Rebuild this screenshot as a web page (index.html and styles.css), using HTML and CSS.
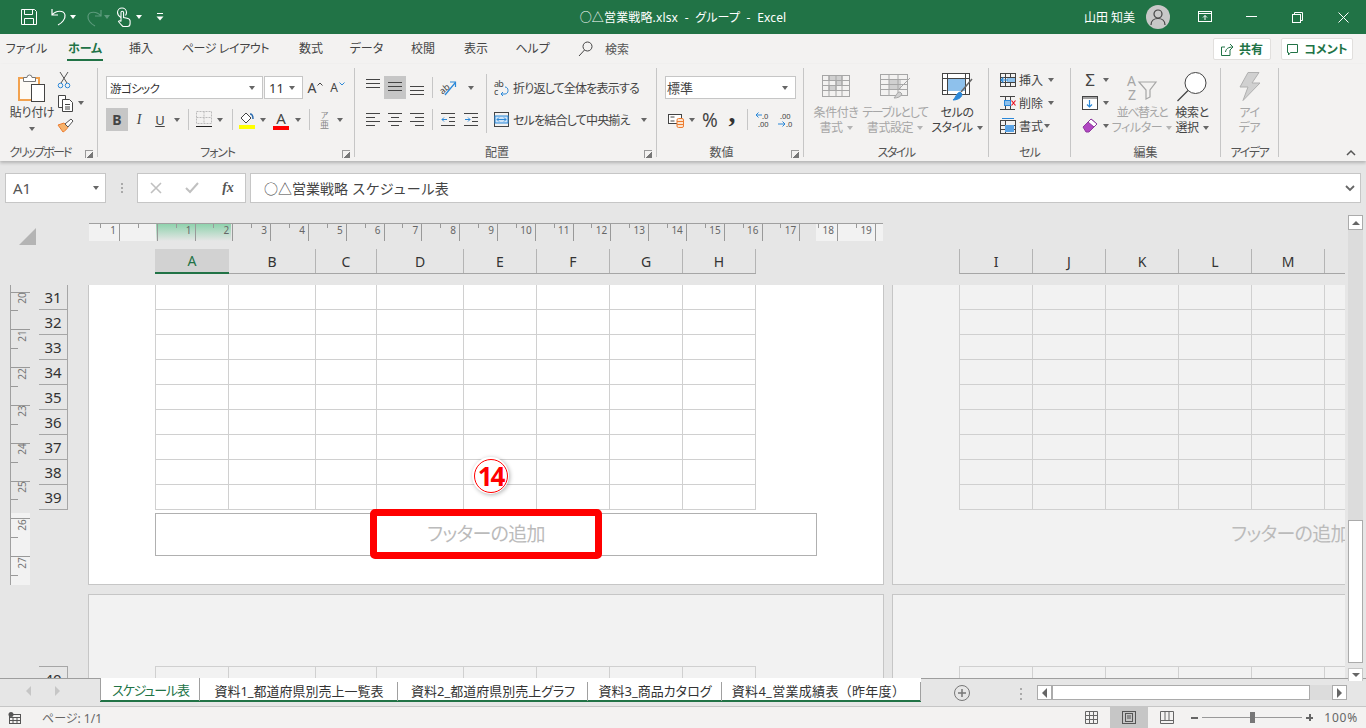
FILE: index.html
```html
<!DOCTYPE html>
<html lang="ja">
<head>
    <meta charset="UTF-8">
    <title>○△営業戦略.xlsx - グループ - Excel</title>
    <link rel="stylesheet" href="styles.css">
</head>
<body>
    <!-- タイトルバー -->
    <header class="titlebar">
        <div class="qat">
            <svg class="qat-save" width="18" height="18" viewBox="0 0 18 18" fill="none" stroke="#fff"><path d="M1.5 1.5h13l2 2v13h-15z"/><path d="M4.5 1.5v5h8v-5M4.5 16.5v-6h9v6"/></svg>
            <svg class="qat-undo" width="20" height="20" viewBox="0 0 20 20" fill="none" stroke="#fff" stroke-width="1.2"><path d="M2 2v6h6M2 8c4-5 12-5 13 0 .6 4-3 8-7 10"/></svg>
            <span class="caret white qat-undo-c"></span>
            <svg class="qat-redo" width="18" height="20" viewBox="0 0 18 20" fill="none" stroke="#5c9a7c" stroke-width="1.2"><path d="M16 3v6h-6M16 9c-4-5-12-5-13 0-.6 4 3 8 7 10"/></svg>
            <span class="caret dim qat-redo-c"></span>
            <svg class="qat-touch" width="16" height="20" viewBox="0 0 16 20" fill="none" stroke="#fff" stroke-width="1.1"><path d="M5 10.500C2.500 9 1.500 7 1.500 5.500a4.500 4.500 0 0 1 9 0c0 1-.3 2-1 3"/><path d="M5 5.500a1.300 1.300 0 0 1 2.600 0v5l3.500.7c1.500.3 3 1 3 2.800v2.500c0 1.500-1 3-2.500 3H7c-1.500-1-3-3-4.500-5 .5-1 2-1 2.500 0z"/></svg>
            <span class="caret white qat-touch-c"></span>
            <svg class="qat-more" width="10" height="10" viewBox="0 0 10 10" fill="#fff"><rect x="2" y="1" width="6" height="1"/><path d="M1.500 4.500h7L5 8.500z"/></svg>
        </div>
        <div class="doc-title">○△営業戦略.xlsx&nbsp; - &nbsp;グループ&nbsp; - &nbsp;Excel</div>
        <div class="title-right">
            <span class="user-name">山田 知美</span>
            <span class="avatar">
                <svg width="16" height="16" viewBox="0 0 16 16" fill="none" stroke="#444" stroke-width="1.200"><circle cx="8" cy="5" r="4"/><path d="M1 16c0-4 3-6.500 7-6.500s7 2.500 7 6.500"/></svg>
            </span>
            <span class="win-btn"><svg width="14" height="12" viewBox="0 0 14 12" fill="none" stroke="#fff"><rect x=".5" y=".5" width="13" height="10"/><path d="M.5 2.500h13M7 9V4.500M5 6.500l2-2 2 2"/></svg></span>
            <span class="win-btn"><svg width="11" height="2" viewBox="0 0 11 2" fill="none" stroke="#fff"><path d="M0 .5h11"/></svg></span>
            <span class="win-btn"><svg width="11" height="11" viewBox="0 0 11 11" fill="none" stroke="#fff"><rect x=".5" y="2.500" width="8" height="8"/><path d="M2.500 2.500v-2h8v8h-2"/></svg></span>
            <span class="win-btn"><svg width="11" height="11" viewBox="0 0 11 11" fill="none" stroke="#fff"><path d="M.5.500l10 10M10.500.5l-10 10"/></svg></span>
        </div>
    </header>

    <!-- リボンのタブ -->
    <nav class="tabs">
        <ul class="tab-list">
            <li>ファイル</li>
            <li class="current"><span>ホーム</span></li>
            <li>挿入</li>
            <li>ページ レイアウト</li>
            <li>数式</li>
            <li>データ</li>
            <li>校閲</li>
            <li>表示</li>
            <li>ヘルプ</li>
        </ul>
        <div class="tell-me">
            <svg width="15" height="16" viewBox="0 0 15 16" fill="none" stroke="#444"><circle cx="9.500" cy="5.500" r="4.500"/><path d="M6.500 9L1 15"/></svg>
            <span>検索</span>
        </div>
        <div class="tab-actions">
            <button class="action-btn share">
                <svg width="13" height="13" viewBox="0 0 13 13" fill="none" stroke="#217346"><path d="M9 7v5.500H.5V4H4"/><path d="M4.500 9C5 5.500 7.500 4 12 4M9 1l3 3-3 3"/></svg>
                共有
            </button>
            <button class="action-btn comment">
                <svg width="13" height="13" viewBox="0 0 13 13" fill="none" stroke="#217346"><path d="M1.500 1.500h10v8h-7l-2 2.500v-2.500h-1z"/></svg>
                コメント
            </button>
        </div>
    </nav>

    <!-- リボン -->
    <section class="ribbon">
        <div class="group g-clip">
            <div class="group-body clip-body">
                <div class="paste">
                    <svg width="28" height="32" viewBox="0 0 28 32"><rect x="1" y="7" width="20" height="22" fill="#fdfaf5" stroke="#f2a24f" stroke-width="2"/><path d="M5.500 10.500v-4h3.500a2.500 2.500 0 0 1 5 0h3.500v4z" fill="#fff" stroke="#777"/><rect x="13.500" y="13.500" width="13" height="17" fill="#fff" stroke="#444"/></svg>
                    <span class="paste-label">貼り付け</span>
                    <span class="caret"></span>
                </div>
                <div class="clip-tools">
                    <span class="tool"><svg width="14" height="18" viewBox="0 0 14 18" fill="none"><path d="M3 1l7 11M11 1L4 12" stroke="#555"/><circle cx="3.500" cy="14.500" r="2.300" stroke="#2b88d8"/><circle cx="10.500" cy="14.500" r="2.300" stroke="#2b88d8"/></svg></span>
                    <span class="tool"><svg width="18" height="18" viewBox="0 0 18 18" fill="#fff" stroke="#444"><path d="M1.500 1.500h7v12h-7z"/><path d="M5.500 5.500h7l3 3v9h-10z"/><path d="M8 10.500h5M8 13h5M8 15h5" fill="none"/></svg><span class="caret clip-caret"></span></span>
                    <span class="tool"><svg width="17" height="15" viewBox="0 0 17 15"><path d="M1 7l5 7c2-1 4-3 5-5L7 5z" fill="#f6b26b" stroke="#ed7d31"/><path d="M8 6l6-5 2 2-5 6z" fill="#fff" stroke="#555"/></svg></span>
                </div>
            </div>
            <div class="group-label">クリップボード</div>
            <span class="launcher"></span>
        </div>

        <div class="group g-font">
            <div class="group-body font-body">
                <div class="font-row1">
                    <div class="select font-name">游ゴシック<span class="caret"></span></div>
                    <div class="select font-size">11<span class="caret"></span></div>
                    <span class="cell grow-a"><span class="letter">A</span><svg width="6" height="4" viewBox="0 0 6 4" fill="none" stroke="#444"><path d="M.5 3.500L3 1l2.500 2.500"/></svg></span>
                    <span class="cell shrink-a"><span class="letter small">A</span><svg width="6" height="4" viewBox="0 0 6 4" fill="none" stroke="#2b88d8"><path d="M.5.500L3 3l2.500-2.500"/></svg></span>
                </div>
                <div class="font-row2">
                    <span class="cell on bold-b">B</span>
                    <span class="cell ital-i">I</span>
                    <span class="cell under-u">U</span>
                    <span class="cell"><span class="caret"></span></span>
                    <span class="cell"><i class="sep"></i></span>
                    <span class="cell"><svg width="16" height="17" viewBox="0 0 16 17" fill="none"><path d="M.5.500h15v12H.5zM8 .5v12M.5 6.500h15" stroke="#bbb" stroke-dasharray="2 1"/><path d="M0 15.500h16" stroke="#222"/></svg></span>
                    <span class="cell"><span class="caret"></span></span>
                    <span class="cell"><i class="sep"></i></span>
                    <span class="cell"><svg width="16" height="18" viewBox="0 0 16 18"><path d="M2 7l5-5 5 5-5 5z" fill="#fff" stroke="#444"/><path d="M11 3c2 0 3 2 3 5" fill="none" stroke="#2b6cb0" stroke-width="1.500"/><rect y="14" width="16" height="4" fill="#ffff00"/></svg></span>
                    <span class="cell"><span class="caret"></span></span>
                    <span class="cell font-a"><span class="a-glyph">A</span></span>
                    <span class="cell"><span class="caret"></span></span>
                    <span class="cell"><i class="sep"></i></span>
                    <span class="cell phonetic"><small>ア</small><span>亜</span></span>
                    <span class="cell"><span class="caret"></span></span>
                </div>
            </div>
            <div class="group-label">フォント</div>
            <span class="launcher"></span>
        </div>

        <div class="group g-align">
            <div class="group-body align-body">
                <div class="align-left">
                    <div class="align-row">
                        <span class="cell"><svg class="high" width="15" height="11" viewBox="0 0 15 11" stroke="#444"><path d="M0 1.500h14M0 5.500h14M0 9.500h14"/></svg></span>
                        <span class="cell on"><svg class="mid" width="15" height="11" viewBox="0 0 15 11" stroke="#444"><path d="M0 1.500h14M0 5.500h14M0 9.500h14"/></svg></span>
                        <span class="cell"><svg class="low" width="15" height="11" viewBox="0 0 15 11" stroke="#444"><path d="M0 1.500h14M0 5.500h14M0 9.500h14"/></svg></span>
                        <span class="cell"><i class="sep"></i></span>
                        <span class="cell"><svg width="18" height="16" viewBox="0 0 18 16" fill="none"><text x="1" y="12" transform="rotate(-40 6 10)" font-size="9" fill="#444" font-family="Noto Sans">ab</text><path d="M6 15L16 3M11 2h5.500v5" stroke="#2b88d8" stroke-width="1.200"/></svg></span>
                        <span class="cell"><span class="caret"></span></span>
                    </div>
                    <div class="align-row">
                        <span class="cell"><svg width="15" height="13" viewBox="0 0 15 13" stroke="#444"><path d="M0 .5h14M0 4.500h9M0 8.500h14M0 12.500h9"/></svg></span>
                        <span class="cell"><svg width="15" height="13" viewBox="0 0 15 13" stroke="#444"><path d="M0 .5h14M3 4.500h8M0 8.500h14M3 12.500h8"/></svg></span>
                        <span class="cell"><svg width="15" height="13" viewBox="0 0 15 13" stroke="#444"><path d="M0 .5h14M5 4.500h9M0 8.500h14M5 12.500h9"/></svg></span>
                        <span class="cell"><i class="sep"></i></span>
                        <span class="cell"><svg width="14" height="13" viewBox="0 0 14 13" fill="none"><path d="M0 .5h14M0 12.500h14M8 4.500h6M8 8.500h6" stroke="#444"/><path d="M6 6.500H1M3 4.500l-2 2 2 2" stroke="#2b88d8"/></svg></span>
                        <span class="cell"><svg width="14" height="13" viewBox="0 0 14 13" fill="none"><path d="M0 .5h14M0 12.500h14M8 4.500h6M8 8.500h6" stroke="#444"/><path d="M1 6.500h5M4 4.500l2 2-2 2" stroke="#2b88d8"/></svg></span>
                    </div>
                </div>
                <i class="sep tall"></i>
                <div class="align-right">
                    <div class="wide-tool">
                        <svg width="15" height="18" viewBox="0 0 15 18" fill="none"><text x="0" y="8" font-size="9" fill="#444" font-family="Noto Sans">ab</text><text x="0" y="16" font-size="9" fill="#444" font-family="Noto Sans">c</text><path d="M11 8c4 0 4 7 0 7H7M9 13l-2 2 2 2" stroke="#2b88d8"/></svg>
                        <span>折り返して全体を表示する</span>
                    </div>
                    <div class="wide-tool">
                        <svg width="15" height="15" viewBox="0 0 15 15" fill="none"><rect x=".5" y=".5" width="14" height="14" stroke="#444"/><rect x="1" y="4" width="13" height="7" fill="#cfe4f7" stroke="#2b88d8"/><path d="M3 7.500h9M5 5.500l-2 2 2 2M10 5.500l2 2-2 2" stroke="#2b88d8"/></svg>
                        <span>セルを結合して中央揃え</span>
                        <span class="caret merge-caret"></span>
                    </div>
                </div>
            </div>
            <div class="group-label">配置</div>
            <span class="launcher"></span>
        </div>

        <div class="group g-num">
            <div class="group-body num-body">
                <div class="select num-format">標準<span class="caret"></span></div>
                <div class="num-row">
                    <span class="cell"><svg width="16" height="16" viewBox="0 0 16 16" fill="none"><rect x=".5" y="2.500" width="13" height="9" fill="#fff" stroke="#444"/><path d="M2.500 5h4M2.500 9h4" stroke="#444"/><rect x="9" y="6.500" width="6.500" height="9" rx="1.500" fill="#fbe5d0" stroke="#ed7d31"/><path d="M9 9.500h6.500M9 12.500h6.500" stroke="#ed7d31"/></svg></span>
                    <span class="cell"><span class="caret"></span></span>
                    <span class="cell percent">%</span>
                    <span class="cell comma">,</span>
                    <span class="cell"><i class="sep"></i></span>
                    <span class="cell"><svg width="16" height="17" viewBox="0 0 16 17" fill="none"><text x="7" y="7.500" font-size="7.500" fill="#444" font-family="Noto Sans">.0</text><text x="3" y="16" font-size="7.500" fill="#444" font-family="Noto Sans">.00</text><path d="M7 4H1M3.500 1.500L1 4l2.500 2.500" stroke="#2b88d8"/></svg></span>
                    <span class="cell"><svg width="16" height="17" viewBox="0 0 16 17" fill="none"><text x="3" y="7.500" font-size="7.500" fill="#444" font-family="Noto Sans">.00</text><text x="9" y="16" font-size="7.500" fill="#444" font-family="Noto Sans">.0</text><path d="M1 13h7M5.500 10.500L8 13l-2.500 2.500" stroke="#2b88d8"/></svg></span>
                </div>
            </div>
            <div class="group-label">数値</div>
            <span class="launcher"></span>
        </div>

        <div class="group g-style">
            <div class="group-body style-body">
                <div class="big off w56">
                    <span class="big-icon"><svg width="28" height="23" viewBox="0 0 28 23" fill="#d0d0d0" stroke="#a6a6a6"><rect x=".5" y=".5" width="27" height="21" fill="#f3f2f1"/><path d="M7 .5h13v5H7zM14 5.500h6v5h-6zM7 10.500h7v5H7z"/><path d="M.5 5.500h27M.5 10.500h27M.5 15.500h27M7 .5v21M14 .5v21M20 .5v21" fill="none"/></svg></span>
                    <span class="big-text">条件付き</span>
                    <span class="big-text">書式<span class="caret soft"></span></span>
                </div>
                <div class="big off w62">
                    <span class="big-icon"><svg width="31" height="25" viewBox="0 0 31 25" fill="none" stroke="#a6a6a6"><rect x=".5" y=".5" width="27" height="21" fill="#f3f2f1"/><rect x="9" y="6" width="12" height="10" fill="#d0d0d0" stroke="none"/><path d="M.5 5.500h27M.5 10.500h27M.5 15.500h27M9 .5v21M18 .5v21"/><path d="M30 4L18 16M14 24c2-2 3-6 6-6l2 2c-1 3-5 4-8 4z" fill="#d0d0d0"/></svg></span>
                    <span class="big-text tight">テーブルとして</span>
                    <span class="big-text">書式設定<span class="caret soft"></span></span>
                </div>
                <div class="big w62">
                    <span class="big-icon"><svg width="31" height="28" viewBox="0 0 31 28" fill="none" stroke="#444"><rect x=".5" y=".5" width="27" height="21" fill="#fff"/><rect x="5" y="5" width="18" height="13" fill="#8ec1ec" stroke="none"/><path d="M.5 5.500h27M5.500.5v21M23.500.5v21M.5 17.500h4"/><path d="M30 6L19 19" stroke="#666" stroke-width="1.500"/><path d="M11 27c3-2 3-7 7-8l2 2c0 4-5 6-9 6z" fill="#2b88d8" stroke="#2b88d8"/></svg></span>
                    <span class="big-text">セルの</span>
                    <span class="big-text">スタイル<span class="caret"></span></span>
                </div>
            </div>
            <div class="group-label">スタイル</div>
        </div>

        <div class="group g-cell">
            <div class="group-body cell-body">
                <div class="cell-row">
                    <svg width="16" height="14" viewBox="0 0 16 14" fill="none"><rect x=".5" y=".5" width="15" height="13" stroke="#444"/><path d="M5.500.5v13M10.500.5v13M.5 4.500h15M.5 9.500h15" stroke="#444"/><rect x="7" y="5" width="8" height="4" fill="#8ec1ec"/><path d="M8 7H1M3.500 4.500L1 7l2.500 2.500" stroke="#2b88d8" stroke-width="1.200"/></svg>
                    <span>挿入</span><span class="caret"></span>
                </div>
                <div class="cell-row">
                    <svg width="16" height="14" viewBox="0 0 16 14" fill="none"><path d="M0 .5h15M0 13.500h15M5.500 0v14M10.500 0v4M10.500 10v4" stroke="#444"/><rect x="4.500" y="4.500" width="6" height="5" fill="#8ec1ec" stroke="#2b88d8"/><path d="M11.500 4.500l4 5M15.500 4.500l-4 5" stroke="#e81123" stroke-width="1.200"/></svg>
                    <span>削除</span><span class="caret"></span>
                </div>
                <div class="cell-row short">
                    <svg width="16" height="16" viewBox="0 0 16 16" fill="none"><rect x=".5" y="2.500" width="15" height="13" stroke="#444"/><path d="M5.500 2.500v13M.5 7.500h15M.5 11.500h15" stroke="#444"/><rect x="5" y="7" width="9" height="7" fill="#5ba4e6"/><path d="M2 .5h12" stroke="#2b88d8"/></svg>
                    <span>書式</span><span class="caret"></span>
                </div>
            </div>
            <div class="group-label">セル</div>
        </div>

        <div class="group g-edit">
            <div class="group-body edit-body">
                <div class="edit-tools">
                    <div class="edit-row"><span class="sigma">Σ</span><span class="caret"></span></div>
                    <div class="edit-row"><svg width="16" height="14" viewBox="0 0 16 14" fill="none"><rect x=".5" y=".5" width="15" height="13" fill="#fff" stroke="#444"/><path d="M.5 2h15" stroke="#444"/><path d="M7.500 4v7M5 8.500l2.500 2.500L10 8.500" stroke="#2b88d8" stroke-width="1.200"/></svg><span class="caret"></span></div>
                    <div class="edit-row"><svg width="16" height="15" viewBox="0 0 16 15"><path d="M1 9l8-8 6 5-8 8H4z" fill="#b146c2" stroke="#8e3a9e"/><path d="M6 4l3-3 6 5-3 3z" fill="#fff" stroke="#8e3a9e"/></svg><span class="caret"></span></div>
                </div>
                <div class="big off w56">
                    <span class="big-icon"><svg width="30" height="28" viewBox="0 0 30 28"><text x="0" y="13" font-size="14" fill="#a6a6a6" font-family="Noto Sans">A</text><text x="1" y="27" font-size="14" fill="#a6a6a6" font-family="Noto Sans">Z</text><path d="M12 9h17l-6 8v7l-4 2v-9z" fill="none" stroke="#a6a6a6" stroke-width="1.200"/></svg></span>
                    <span class="big-text tight">並べ替えと</span>
                    <span class="big-text">フィルター<span class="caret soft"></span></span>
                </div>
                <div class="big w44">
                    <span class="big-icon"><svg width="30" height="30" viewBox="0 0 30 30" fill="none" stroke="#444"><circle cx="18.500" cy="11" r="10.500" fill="#fff"/><path d="M11 18.500L.5 29" stroke-width="1.200"/></svg></span>
                    <span class="big-text">検索と</span>
                    <span class="big-text">選択<span class="caret"></span></span>
                </div>
            </div>
            <div class="group-label">編集</div>
        </div>

        <div class="group g-idea">
            <div class="group-body idea-body">
                <div class="big off">
                    <span class="big-icon"><svg width="22" height="29" viewBox="0 0 22 29" fill="#d0d0d0" stroke="#b0b0b0"><path d="M9 .5h11L13 11h8L4 28.500 9 15H1z"/></svg></span>
                    <span class="big-text">アイ</span>
                    <span class="big-text">デア</span>
                </div>
            </div>
            <div class="group-label">アイデア</div>
        </div>

        <svg class="collapse" width="10" height="6" viewBox="0 0 10 6" fill="none" stroke="#555" stroke-width="1.500"><path d="M1 5l4-4 4 4"/></svg>
    </section>

    <!-- 数式バー -->
    <section class="formula-bar">
        <div class="name-box">A1<span class="caret"></span></div>
        <div class="fx-dots"><i></i><i></i><i></i></div>
        <div class="fx-buttons">
            <svg width="12" height="12" viewBox="0 0 12 12" fill="none" stroke="#c0c0c0" stroke-width="1.600"><path d="M1 1l10 10M11 1L1 11"/></svg>
            <svg width="14" height="12" viewBox="0 0 14 12" fill="none" stroke="#c0c0c0" stroke-width="2"><path d="M1 6l4 4 8-9"/></svg>
            <span class="fx-label">fx</span>
        </div>
        <div class="fx-input">
            <span>○△営業戦略 スケジュール表</span>
            <svg width="10" height="7" viewBox="0 0 10 7" fill="none" stroke="#666" stroke-width="1.800"><path d="M1 1l4 4 4-4"/></svg>
        </div>
    </section>

    <!-- シート -->
    <main class="workspace">
        <div class="sheet">
            <svg class="corner" width="17" height="17" viewBox="0 0 17 17" fill="#b4b4b4"><path d="M17 0v17H0z"/></svg>

            <div class="h-ruler">
                <span>1</span><span></span>
                <span>1</span><span>2</span><span>3</span><span>4</span><span>5</span><span>6</span><span>7</span>
                <span>8</span><span>9</span><span>10</span><span>11</span><span>12</span><span>13</span><span>14</span>
                <span>15</span><span>16</span><span>17</span><span>18</span><span>19</span>
            </div>

            <div class="col-heads left-heads">
                <span class="selected">A</span><span>B</span><span>C</span><span>D</span><span>E</span><span>F</span><span>G</span><span>H</span>
            </div>
            <div class="col-heads right-heads">
                <span>I</span><span>J</span><span>K</span><span>L</span><span>M</span><span></span>
            </div>

            <div class="rail">
                <div class="v-ruler">
                    <span>20</span><span>21</span><span>22</span><span>23</span><span>24</span><span>25</span><span>26</span><span>27</span>
                </div>
                <div class="row-heads">
                    <span>31</span><span>32</span><span>33</span><span>34</span><span>35</span><span>36</span><span>37</span><span>38</span><span>39</span>
                </div>
            </div>

            <div class="page page-a">
                <div class="cells eight">
                    <i></i><i></i><i></i><i></i><i></i><i></i><i></i><i></i>
                    <i></i><i></i><i></i><i></i><i></i><i></i><i></i><i></i>
                    <i></i><i></i><i></i><i></i><i></i><i></i><i></i><i></i>
                    <i></i><i></i><i></i><i></i><i></i><i></i><i></i><i></i>
                    <i></i><i></i><i></i><i></i><i></i><i></i><i></i><i></i>
                    <i></i><i></i><i></i><i></i><i></i><i></i><i></i><i></i>
                    <i></i><i></i><i></i><i></i><i></i><i></i><i></i><i></i>
                    <i></i><i></i><i></i><i></i><i></i><i></i><i></i><i></i>
                    <i></i><i></i><i></i><i></i><i></i><i></i><i></i><i></i>
                </div>
                <div class="footer-box">フッターの追加</div>
                <div class="marker"></div>
                <div class="step-badge"><span>14</span></div>
            </div>
            <div class="page page-b">
                <div class="cells six">
                    <i></i><i></i><i></i><i></i><i></i><i></i>
                    <i></i><i></i><i></i><i></i><i></i><i></i>
                    <i></i><i></i><i></i><i></i><i></i><i></i>
                    <i></i><i></i><i></i><i></i><i></i><i></i>
                    <i></i><i></i><i></i><i></i><i></i><i></i>
                    <i></i><i></i><i></i><i></i><i></i><i></i>
                    <i></i><i></i><i></i><i></i><i></i><i></i>
                    <i></i><i></i><i></i><i></i><i></i><i></i>
                    <i></i><i></i><i></i><i></i><i></i><i></i>
                </div>
                <div class="footer-box plain">フッターの追加</div>
            </div>

            <div class="rail rail-low">
                <div class="row-heads"><span>40</span></div>
            </div>
            <div class="page page-c">
                <div class="cells eight top-line">
                    <i></i><i></i><i></i><i></i><i></i><i></i><i></i><i></i>
                </div>
            </div>
            <div class="page page-d">
                <div class="cells six top-line">
                    <i></i><i></i><i></i><i></i><i></i><i></i>
                </div>
            </div>
        </div>

        <aside class="v-scroll">
            <span class="scroll-btn"><i class="tri-up"></i></span>
            <span class="v-track"></span>
            <span class="v-thumb"></span>
            <span class="scroll-btn low"><i class="tri-down"></i></span>
        </aside>
    </main>

    <!-- シート見出し -->
    <footer class="sheet-tabs">
        <div class="tab-nav"><i class="tri-left"></i><i class="tri-right"></i></div>
        <ul class="sheet-list">
            <li class="active">スケジュール表</li>
            <li>資料1_都道府県別売上一覧表</li>
            <li>資料2_都道府県別売上グラフ</li>
            <li>資料3_商品カタログ</li>
            <li>資料4_営業成績表（昨年度）</li>
        </ul>
        <svg class="add-sheet" width="16" height="16" viewBox="0 0 16 16" fill="none" stroke="#777"><circle cx="8" cy="8" r="7.500"/><path d="M8 4v8M4 8h8" stroke-width="1.500"/></svg>
        <div class="tab-dots"><i></i><i></i><i></i></div>
        <div class="h-scroll">
            <span class="scroll-btn"><i class="tri-left dark"></i></span>
            <span class="h-thumb"></span>
            <span class="h-track"></span>
            <span class="scroll-btn"><i class="tri-right dark"></i></span>
        </div>
    </footer>

    <!-- ステータスバー -->
    <footer class="status">
        <svg class="status-icon" width="13" height="12" viewBox="0 0 13 12" fill="none" stroke="#555"><rect x="1.500" y="2.500" width="11" height="9"/><path d="M1.500 5.500h11M1.500 8.500h11M5 5.500v6M9 5.500v6"/><circle cx="3" cy="2.500" r="2.500" fill="#555" stroke="none"/></svg>
        <span class="page-count">ページ: 1/1</span>
        <div class="status-right">
            <span class="view-btn"><svg width="13" height="13" viewBox="0 0 13 13" fill="none" stroke="#666"><path d="M.5.500h12v12H.5zM4.500.5v12M8.500.5v12M.5 4.500h12M.5 8.500h12"/></svg></span>
            <span class="view-btn active"><svg width="14" height="13" viewBox="0 0 14 13" fill="none" stroke="#555"><rect x=".5" y=".5" width="13" height="12"/><rect x="3.500" y="2.500" width="7" height="8"/><path d="M5 5h4M5 7h4"/></svg></span>
            <span class="view-btn"><svg width="14" height="13" viewBox="0 0 14 13" fill="none" stroke="#666"><path d="M.5.500h13v12H.5zM.5 9.500h13M5 .5v9M9 .5v9" /></svg></span>
            <span class="zoom-minus"></span>
            <span class="slider"><i></i></span>
            <span class="zoom-plus"></span>
            <span class="zoom-value">100%</span>
        </div>
    </footer>
</body>
</html>
```

FILE: styles.css
```css
* {
    box-sizing: border-box;
}

html, body {
    margin: 0;
    height: 100%;
}

body {
    width: 1366px;
    height: 728px;
    overflow: hidden;
    display: flex;
    flex-direction: column;
    background: #e6e6e6;
    color: #444;
    font-family: "Noto Sans", "Noto Sans CJK JP", sans-serif;
    font-size: 12px;
    font-feature-settings: "palt";
}

ul {
    list-style: none;
    margin: 0;
    padding: 0;
}

i {
    font-style: normal;
}

svg {
    display: block;
    flex: none;
    overflow: visible;
}

/* 共通パーツ */
.caret {
    display: inline-block;
    flex: none;
    width: 0;
    height: 0;
    border-left: 3.500px solid transparent;
    border-right: 3.500px solid transparent;
    border-top: 4px solid #666;
}

.caret.white { border-top-color: #fff; }
.caret.dim { border-top-color: #5c9a7c; }
.caret.soft { border-top-color: #b4b4b4; margin-left: 4px; vertical-align: 2px; }

.sep {
    display: block;
    width: 1px;
    height: 21px;
    background: #c6c6c6;
}

.cell {
    display: flex;
    align-items: center;
    justify-content: center;
    height: 23px;
}

.cell.on {
    background: #c6c6c6;
}

.select {
    display: flex;
    align-items: center;
    justify-content: space-between;
    height: 23px;
    padding: 0 7px 0 3px;
    background: #fff;
    border: 1px solid #c6c6c6;
    color: #333;
}

/* タイトルバー */
.titlebar {
    display: grid;
    grid-template-columns: 1fr auto 1fr;
    align-items: center;
    height: 34px;
    flex: none;
    background: #217346;
    color: #fff;
}

.qat {
    display: flex;
    align-items: center;
    padding-left: 20px;
}

.qat-undo { margin-left: 12px; }
.qat-undo-c { margin-left: 0; }
.qat-redo { margin-left: 9px; }
.qat-redo-c { margin-left: 1px; }
.qat-touch { margin-left: 6px; }
.qat-touch-c { margin-left: 4px; }
.qat-more { margin-left: 13px; }

.doc-title {
    font-size: 12px;
    letter-spacing: 0.15px;
    white-space: nowrap;
}

.title-right {
    display: flex;
    align-items: center;
    justify-content: flex-end;
}

.user-name {
    margin-right: 11px;
}

.avatar {
    display: flex;
    align-items: center;
    justify-content: center;
    width: 24px;
    height: 24px;
    margin-right: 12px;
    border-radius: 50%;
    background: #c8c8c8;
}

.win-btn {
    display: flex;
    align-items: center;
    justify-content: center;
    width: 46px;
    height: 34px;
}

/* タブ */
.tabs {
    display: flex;
    height: 30px;
    flex: none;
    background: #f3f2f1;
}

.tab-list {
    display: grid;
    grid-template-columns: 53px 64px 48px 121px 50px 61px 52px 54px 59px;
    justify-items: center;
    padding-top: 7px;
    line-height: 16px;
    white-space: nowrap;
}

.tab-list li:nth-child(4) {
    letter-spacing: -0.4px;
}

.current span {
    display: block;
    padding: 0 1px 2px;
    border-bottom: 2px solid #217346;
    color: #217346;
    font-weight: 700;
}

.tell-me {
    display: flex;
    align-items: center;
    gap: 12px;
    margin-left: 16px;
    color: #555;
}

.tab-actions {
    display: flex;
    gap: 10px;
    margin-left: auto;
    padding: 4px 13px 0 0;
}

.action-btn {
    display: flex;
    align-items: center;
    justify-content: center;
    gap: 5px;
    height: 22px;
    padding: 0;
    background: #fff;
    border: 1px solid #e1dfdd;
    border-radius: 2px;
    color: #217346;
    font: 700 12px "Noto Sans", "Noto Sans CJK JP", sans-serif;
    font-feature-settings: "palt";
}

.share { width: 58px; }
.comment { width: 72px; }

/* リボン */
.ribbon {
    position: relative;
    z-index: 2;
    display: flex;
    height: 97px;
    flex: none;
    padding: 4px 0;
    background: #f3f2f1;
    box-shadow: 0 2px 3px rgba(0, 0, 0, 0.22);
}

.group {
    position: relative;
    display: flex;
    flex-direction: column;
    border-right: 1px solid #c6c6c6;
}

.group-body {
    height: 78px;
    flex: none;
}

.group-label {
    height: 14px;
    line-height: 14px;
    text-align: center;
    color: #555;
    white-space: nowrap;
}

.g-clip .group-label,
.g-font .group-label,
.g-align .group-label,
.g-num .group-label {
    padding-right: 17px;
}

.g-clip .group-label { letter-spacing: -1.8px; }
.g-font .group-label { letter-spacing: -1.2px; }
.g-style .group-label { letter-spacing: -1.6px; }
.g-cell .group-label { letter-spacing: -1px; }
.g-idea .group-label { letter-spacing: -1.4px; }

.launcher {
    position: absolute;
    right: 4px;
    bottom: -1px;
    width: 8px;
    height: 8px;
    border-left: 1px solid #999;
    border-top: 1px solid #999;
    background: linear-gradient(135deg, transparent 55%, #777 55%);
}

.collapse {
    position: absolute;
    right: 10px;
    bottom: 5px;
}

.g-clip { width: 98px; }
.g-font { width: 257px; }
.g-align { width: 302px; }
.g-num { width: 147px; }
.g-style { width: 185px; }
.g-cell { width: 82px; }
.g-edit { width: 150px; }
.g-idea { width: 58px; }

/* クリップボード */
.clip-body {
    display: flex;
}

.paste {
    display: flex;
    flex-direction: column;
    align-items: center;
    width: 46px;
    margin-left: 9px;
    padding-top: 3px;
}

.paste-label {
    margin-top: 2px;
    line-height: 16px;
    letter-spacing: -0.3px;
    white-space: nowrap;
}

.paste .caret {
    margin-top: 6px;
}

.clip-tools {
    display: flex;
    flex-direction: column;
    width: 40px;
    margin-left: 2px;
}

.tool {
    display: flex;
    align-items: center;
    height: 23px;
}

.clip-caret {
    margin-left: 3px;
}

/* フォント */
.font-body {
    padding: 8px 0 0 8px;
}

.font-row1 {
    display: grid;
    grid-template-columns: 157px 40px 24px 20px;
}

.font-size {
    margin-left: 1px;
    padding-left: 4px;
    font-size: 13px;
}

.font-name {
    font-size: 11.500px;
    letter-spacing: -0.6px;
}

.letter {
    font-size: 14px;
    color: #444;
}

.letter.small {
    font-size: 12px;
}

.grow-a svg { margin: -7px 0 0 1px; }
.shrink-a svg { margin: -7px 0 0 1px; }
.font-row1 .cell { margin-left: 1px; }

.font-row2 {
    display: grid;
    grid-template-columns: 22px 22px 20px 13px 11px 19px 14px 10px 20px 12px 24px 10px 12px 19px 12px;
    margin-top: 9px;
}

.bold-b {
    font: 700 14px "Noto Sans", sans-serif;
}

.ital-i {
    font: italic 14px "Liberation Serif", serif;
}

.under-u {
    font-size: 13px;
    text-decoration: underline;
}

.a-glyph {
    display: block;
    width: 16px;
    line-height: 16px;
    font-size: 15px;
    text-align: center;
    border-bottom: 4px solid #f00;
}

.phonetic {
    flex-direction: column;
    color: #888;
    line-height: 10px;
}

.phonetic small {
    font-size: 8px;
}

.phonetic span {
    font-size: 9px;
}

/* 配置 */
.align-body {
    display: flex;
    padding: 8px 0 0 7px;
}

.align-left {
    width: 124px;
}

.align-row {
    display: grid;
    grid-template-columns: 22px 22px 22px 8px 24px 21px;
    height: 23px;
    margin-bottom: 9px;
}

.high { transform: translateY(-4px); }
.mid { transform: translateY(-1px); }
.low { transform: translateY(3px); }

.sep.tall {
    height: 59px;
    margin: -2px 7px 0 0;
}

.align-right {
    display: flex;
    flex-direction: column;
    gap: 9px;
}

.wide-tool {
    display: flex;
    align-items: center;
    gap: 4px;
    height: 23px;
    white-space: nowrap;
    letter-spacing: -0.8px;
    color: #444;
}

.merge-caret {
    margin-left: 7px;
}

/* 数値 */
.num-body {
    padding: 8px 0 0 8px;
}

.num-format {
    width: 131px;
    padding-left: 1px;
    font-size: 13px;
    color: #444;
}

.num-row {
    display: grid;
    grid-template-columns: 21px 12px 24px 20px 10px 21px 23px;
    margin-top: 9px;
}

.percent {
    font-size: 19px;
    color: #444;
}

.comma {
    padding-bottom: 14px;
    color: #333;
    font: 700 28px "Liberation Serif", serif;
}

/* スタイル・編集 */
.style-body {
    display: flex;
    padding-left: 4px;
}

.big {
    display: flex;
    flex-direction: column;
    align-items: center;
    color: #444;
    white-space: nowrap;
}

.big.off {
    color: #a6a6a6;
}

.w44 { width: 44px; }
.w56 { width: 56px; }
.w62 { width: 62px; }

.big-icon {
    display: flex;
    align-items: center;
    justify-content: center;
    height: 37px;
}

.big-text {
    height: 15px;
    line-height: 15px;
    letter-spacing: -0.4px;
}

.big-text.tight {
    letter-spacing: -1.4px;
}

.big-text .caret {
    margin-left: 4px;
    vertical-align: 2px;
}

/* セル */
.cell-body {
    padding-left: 11px;
}

.cell-row {
    display: grid;
    grid-template-columns: 19px 29px 14px;
    align-items: center;
    height: 23px;
    font-size: 12px;
}

.cell-row.short {
    grid-template-columns: 19px 25px 14px;
}

.edit-body {
    display: flex;
}

.edit-tools {
    width: 43px;
    padding-left: 11px;
}

.edit-row {
    display: flex;
    align-items: center;
    justify-content: space-between;
    width: 27px;
    height: 23px;
}

.sigma {
    width: 16px;
    font-size: 17px;
    text-align: center;
    color: #444;
}

.idea-body {
    display: flex;
    justify-content: center;
}

/* 数式バー */
.formula-bar {
    display: flex;
    flex: none;
    height: 52px;
    padding: 12px 5px 10px;
    background: #e6e6e6;
}

.name-box {
    display: flex;
    align-items: center;
    justify-content: space-between;
    width: 101px;
    padding: 0 6px 0 7px;
    background: #fff;
    border: 1px solid #c6c6c6;
    font-size: 15px;
    color: #555;
}

.fx-dots {
    display: flex;
    flex-direction: column;
    align-items: center;
    justify-content: center;
    gap: 2px;
    width: 31px;
}

.fx-dots i, .tab-dots i {
    display: block;
    width: 2px;
    height: 2px;
    background: #aaa;
}

.fx-buttons {
    display: grid;
    grid-template-columns: 36px 36px 36px;
    justify-items: center;
    align-items: center;
    width: 109px;
    background: #fff;
    border: 1px solid #c6c6c6;
}

.fx-label {
    font: italic 700 14px "Liberation Serif", serif;
    color: #555;
}

.fx-input {
    display: flex;
    align-items: center;
    justify-content: space-between;
    flex: 1;
    margin-left: 4px;
    padding: 0 5px 0 13px;
    background: #fff;
    border: 1px solid #c6c6c6;
    font-size: 14px;
    font-feature-settings: normal;
    color: #444;
}

/* シート */
.workspace {
    display: flex;
    flex: none;
    height: 465px;
    background: #e6e6e6;
}

.sheet {
    display: grid;
    flex: none;
    width: 1345px;
    grid-template-columns: 88px 796px 8px 453px;
    grid-template-rows: 10px 18px 8px 25px 11px 300px 9px 84px;
    overflow: hidden;
}

.corner {
    grid-column: 1;
    grid-row: 2 / 5;
    margin: 5px 0 0 19px;
}

.h-ruler {
    grid-column: 2;
    grid-row: 2;
    display: flex;
    margin-left: 1px;
    width: 794px;
    border-top: 1px solid #a0a0a0;
    background:
        repeating-linear-gradient(90deg, #999 -7.9px, #999 -6.9px, transparent -6.9px, transparent 29.9px) 0 0 / 100% 100% no-repeat,
        repeating-linear-gradient(90deg, #999 -26.8px, #999 -25.8px, transparent -25.8px, transparent 11px) 0 0 / 100% 4px no-repeat,
        linear-gradient(#f2f2f2, #f2f2f2) 0 0 / 67px 100% no-repeat,
        linear-gradient(#8fd2ad, #e6e6e6) 67px 0 / 75px 100% no-repeat,
        linear-gradient(#f2f2f2, #f2f2f2) 727px 0 / 67px 100% no-repeat;
    font-size: 10px;
    line-height: 13px;
    color: #666;
}

.h-ruler span {
    flex: none;
    width: 37.800px;
    padding-right: 3px;
    text-align: right;
}

.h-ruler span:first-child {
    width: 29.900px;
}

.col-heads {
    grid-row: 4;
    display: grid;
    height: 25px;
    border-bottom: 1px solid #a6a6a6;
    font-size: 14px;
    color: #333;
}

.col-heads span {
    display: flex;
    align-items: center;
    justify-content: center;
    border-right: 1px solid #b4b4b4;
}

.left-heads {
    grid-column: 2;
    grid-template-columns: 74px 87px 61px 87px 73px 73px 73px 73px;
    width: 601px;
    margin-left: 67px;
}

.left-heads .selected {
    margin-bottom: -1px;
    background: #d2d2d2;
    border-right: 0;
    border-bottom: 2px solid #217346;
    color: #217346;
}

.right-heads {
    grid-column: 4;
    grid-template-columns: 73px 73px 73px 73px 73px 21px;
    margin-left: 67px;
    border-left: 1px solid #b4b4b4;
}

.rail {
    grid-column: 1;
    grid-row: 6;
    display: flex;
    align-items: flex-start;
}

.v-ruler {
    display: flex;
    flex-direction: column;
    flex: none;
    width: 20px;
    height: 300px;
    margin-left: 10px;
    padding-top: 7px;
    border-left: 1px solid #a0a0a0;
    background:
        repeating-linear-gradient(180deg, #999 -31.3px, #999 -30.3px, transparent -30.3px, transparent 6.5px) 0 0 / 100% 100% no-repeat,
        repeating-linear-gradient(180deg, #999 -12.4px, #999 -11.4px, transparent -11.4px, transparent 25.4px) 0 0 / 7px 100% no-repeat,
        linear-gradient(#f2f2f2, #f2f2f2) 0 228px / 100% 72px no-repeat;
    font-size: 10px;
    color: #777;
}

.v-ruler span {
    display: block;
    flex: none;
    height: 37.800px;
    padding: 0 4px 0 0;
    writing-mode: vertical-rl;
    transform: rotate(180deg);
    text-align: right;
    line-height: 14px;
}

.row-heads {
    display: flex;
    flex-direction: column;
    width: 29px;
    margin-left: 9px;
    flex: none;
}

.row-heads span {
    display: flex;
    align-items: center;
    justify-content: center;
    height: 25px;
    border-right: 1px solid #a6a6a6;
    border-bottom: 1px solid #a6a6a6;
    font-size: 15px;
    color: #333;
}

.rail-low {
    grid-row: 8;
    overflow: hidden;
    padding-top: 72px;
}

.rail-low .row-heads {
    margin-left: 39px;
    border-top: 1px solid #a6a6a6;
}

.page {
    position: relative;
    overflow: hidden;
    background: #f2f2f2;
    border-left: 1px solid #c6c6c6;
    border-bottom: 1px solid #c6c6c6;
}

.page-a {
    grid-column: 2;
    grid-row: 6;
    background: #fff;
    border-right: 1px solid #c6c6c6;
}

.page-b {
    grid-column: 4;
    grid-row: 6;
}

.page-c, .page-d {
    grid-row: 8;
    border-top: 1px solid #c6c6c6;
    border-bottom: 0;
}

.page-c {
    grid-column: 2;
    border-right: 1px solid #c6c6c6;
}

.page-d {
    grid-column: 4;
}

.cells {
    display: grid;
    grid-auto-rows: 25px;
    margin-left: 66px;
    border-left: 1px solid #d0d0d0;
}

.cells i {
    border-right: 1px solid #d0d0d0;
    border-bottom: 1px solid #d0d0d0;
}

.eight {
    width: 601px;
    grid-template-columns: 73px 87px 61px 87px 73px 73px 73px 73px;
}

.six {
    width: 440px;
    grid-template-columns: repeat(6, 73px);
}

.top-line {
    margin-top: 71px;
    border-top: 1px solid #d0d0d0;
}

.footer-box {
    display: flex;
    align-items: center;
    justify-content: center;
    width: 662px;
    height: 43px;
    margin: 3px 0 0 66px;
    border: 1px solid #b0b0b0;
    font-size: 19px;
    letter-spacing: -0.7px;
    line-height: 1;
    color: #bbb;
    white-space: nowrap;
}

.footer-box.plain {
    border-color: transparent;
}

/* 注釈の赤枠と番号 */
.marker {
    position: absolute;
    left: 281px;
    top: 224px;
    width: 232px;
    height: 50px;
    border: 7px solid #f00;
    border-radius: 5px;
}

.step-badge {
    position: absolute;
    left: 383px;
    top: 172px;
    display: flex;
    align-items: center;
    justify-content: center;
    width: 37px;
    height: 37px;
    background: #fff;
    border: 4px solid #fff;
    border-radius: 50%;
    box-shadow: 1px 1px 4px rgba(0, 0, 0, 0.3);
}

.step-badge span {
    display: flex;
    align-items: center;
    justify-content: center;
    width: 34px;
    height: 34px;
    flex: none;
    border: 1px solid #f00;
    border-radius: 50%;
    color: #f00;
    font: 700 26px "Noto Sans", sans-serif;
    letter-spacing: -2px;
}

/* スクロールバー */
.v-scroll {
    display: flex;
    flex-direction: column;
    width: 15px;
    margin: 2px 0 0 3px;
}

.scroll-btn {
    display: flex;
    align-items: center;
    justify-content: center;
    flex: none;
    width: 15px;
    height: 15px;
    background: #fff;
    border: 1px solid #ababab;
}

.scroll-btn.low {
    height: 13px;
    margin-top: 2px;
    border-bottom: 0;
    border-color: #c6c6c6;
}

.v-track {
    height: 290px;
    background: #dcdcdc;
}

.v-thumb {
    height: 143px;
    background: #fff;
    border: 1px solid #ababab;
}

.tri-up, .tri-down, .tri-left, .tri-right {
    display: block;
    width: 0;
    height: 0;
}

.tri-up {
    border: 4px solid transparent;
    border-top: 0;
    border-bottom: 4px solid #666;
}

.tri-down {
    border: 4px solid transparent;
    border-bottom: 0;
    border-top: 4px solid #666;
}

.tri-left {
    border: 5px solid transparent;
    border-left: 0;
    border-right: 5px solid #c6c6c6;
}

.tri-right {
    border: 5px solid transparent;
    border-right: 0;
    border-left: 5px solid #c6c6c6;
}

.tri-left.dark { border-right-color: #666; }
.tri-right.dark { border-left-color: #666; }

/* シート見出し */
.sheet-tabs {
    display: flex;
    align-items: flex-start;
    flex: none;
    height: 28px;
    background: #e6e6e6;
    border-top: 1px solid #9e9e9e;
}

.tab-nav {
    display: flex;
    align-items: center;
    gap: 24px;
    width: 100px;
    height: 24px;
    padding-left: 26px;
}

.sheet-list {
    display: grid;
    grid-template-columns: 100px 198px 190px 134px 199px;
    flex: none;
    height: 24px;
    margin-top: -1px;
    background: #fff;
    border-bottom: 2px solid #217346;
    color: #333;
    font-size: 13px;
}

.sheet-list li {
    position: relative;
    display: flex;
    align-items: center;
    justify-content: center;
    height: 22px;
    margin-top: 1px;
    white-space: nowrap;
}

.sheet-list li::after {
    content: "";
    position: absolute;
    right: 0;
    top: 3px;
    bottom: 0;
    width: 1px;
    background: #a0a0a0;
}

.sheet-list .active {
    margin-top: 0;
    height: 23px;
    border-left: 1px solid #a0a0a0;
    letter-spacing: -1.1px;
    color: #217346;
}

.sheet-list .active::after {
    top: 0;
}

.sheet-list li:last-child {
    padding-right: 6px;
    font-feature-settings: normal;
    letter-spacing: 0.3px;
}

.add-sheet {
    margin: 6px 0 0 33px;
}

.tab-dots {
    display: flex;
    flex-direction: column;
    gap: 3px;
    margin: 9px 0 0 50px;
}

.h-scroll {
    display: flex;
    margin: 6px 0 0 15px;
    width: 310px;
    height: 15px;
}

.h-thumb {
    width: 258px;
    background: #fff;
    border: 1px solid #ababab;
}

.h-track {
    width: 22px;
    background: #dcdcdc;
}

/* ステータスバー */
.status {
    display: flex;
    align-items: center;
    flex: 1;
    background: #f3f2f1;
    border-top: 1px solid #c6c6c6;
    color: #666;
}

.status-icon {
    margin-left: 8px;
}

.page-count {
    margin-left: 21px;
}

.status-right {
    display: flex;
    align-items: center;
    height: 100%;
    margin-left: auto;
    padding-right: 8px;
}

.view-btn {
    display: flex;
    align-items: center;
    justify-content: center;
    width: 38px;
    height: 100%;
}

.view-btn.active {
    background: #c6c6c6;
}

.zoom-minus, .zoom-plus {
    position: relative;
    display: block;
    width: 7px;
    height: 2px;
    background: #666;
}

.zoom-minus {
    margin-left: 5px;
}

.zoom-plus::after {
    content: "";
    position: absolute;
    left: 2.500px;
    top: -2.500px;
    width: 2px;
    height: 7px;
    background: #666;
}

.slider {
    position: relative;
    display: block;
    width: 100px;
    height: 1px;
    margin: 0 4px;
    background: #999;
}

.slider i {
    position: absolute;
    left: 48px;
    top: -5px;
    width: 5px;
    height: 11px;
    background: #777;
}

.zoom-value {
    margin-left: 11px;
    font-size: 12px;
    letter-spacing: 0.8px;
}
```
